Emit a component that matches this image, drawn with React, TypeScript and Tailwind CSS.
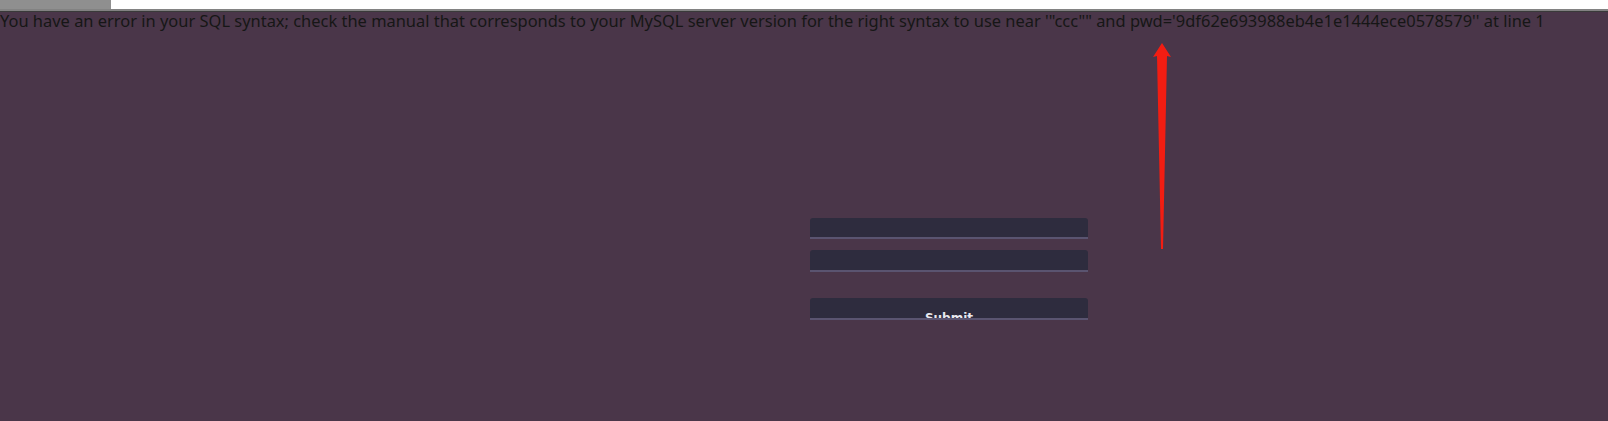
import React from "react";

export default function App() {
  return (
    <div className="min-h-screen w-full bg-[#4a3649] flex flex-col overflow-hidden">
      <div className="flex h-[9px] w-full bg-white">
        <div className="w-[111px] h-full bg-[#8f8f8f]" />
      </div>
      <div className="h-[2px] w-full bg-[#828282]" />
      <div className="h-px w-full bg-[#3a3a3a]" />
      <div className="relative flex-1">
        <p
          className="text-[16.45px] leading-[20px] text-[#161616] whitespace-nowrap -mt-[1px]"
          style={{ fontFamily: '"Noto Sans", "Open Sans", sans-serif' }}
        >
          You have an error in your SQL syntax; check the manual that corresponds to your MySQL server version for the right syntax to use near '"ccc"" and pwd='9df62e693988eb4e1e1444ece0578579'' at line 1
        </p>
        <form className="ml-[810px] mt-[187px] w-[278px] flex flex-col">
          <div className="h-[21px] rounded-t-[3px] bg-[#2e2c3e] border-b-2 border-[#5a5470]" />
          <div className="mt-[11px] h-[22px] rounded-t-[3px] bg-[#2e2c3e] border-b-2 border-[#5a5470]" />
          <div className="mt-[26px] h-[22px] rounded-t-[3px] bg-[#2e2c3e] border-b-2 border-[#5a5470] overflow-hidden flex justify-center">
            <span
              className="text-[12px] font-bold text-[#e8e8ee] leading-none pt-[14px]"
              style={{ fontFamily: '"DejaVu Sans", sans-serif' }}
            >
              Submit
            </span>
          </div>
        </form>
        <svg
          className="absolute left-[1150px] top-[30px]"
          width="24"
          height="210"
          viewBox="0 0 24 210"
        >
          <polygon
            points="12,1 21,15 17,14 13,207 11,207 7,14 3,15"
            fill="#f21d12"
          />
        </svg>
      </div>
    </div>
  );
}
